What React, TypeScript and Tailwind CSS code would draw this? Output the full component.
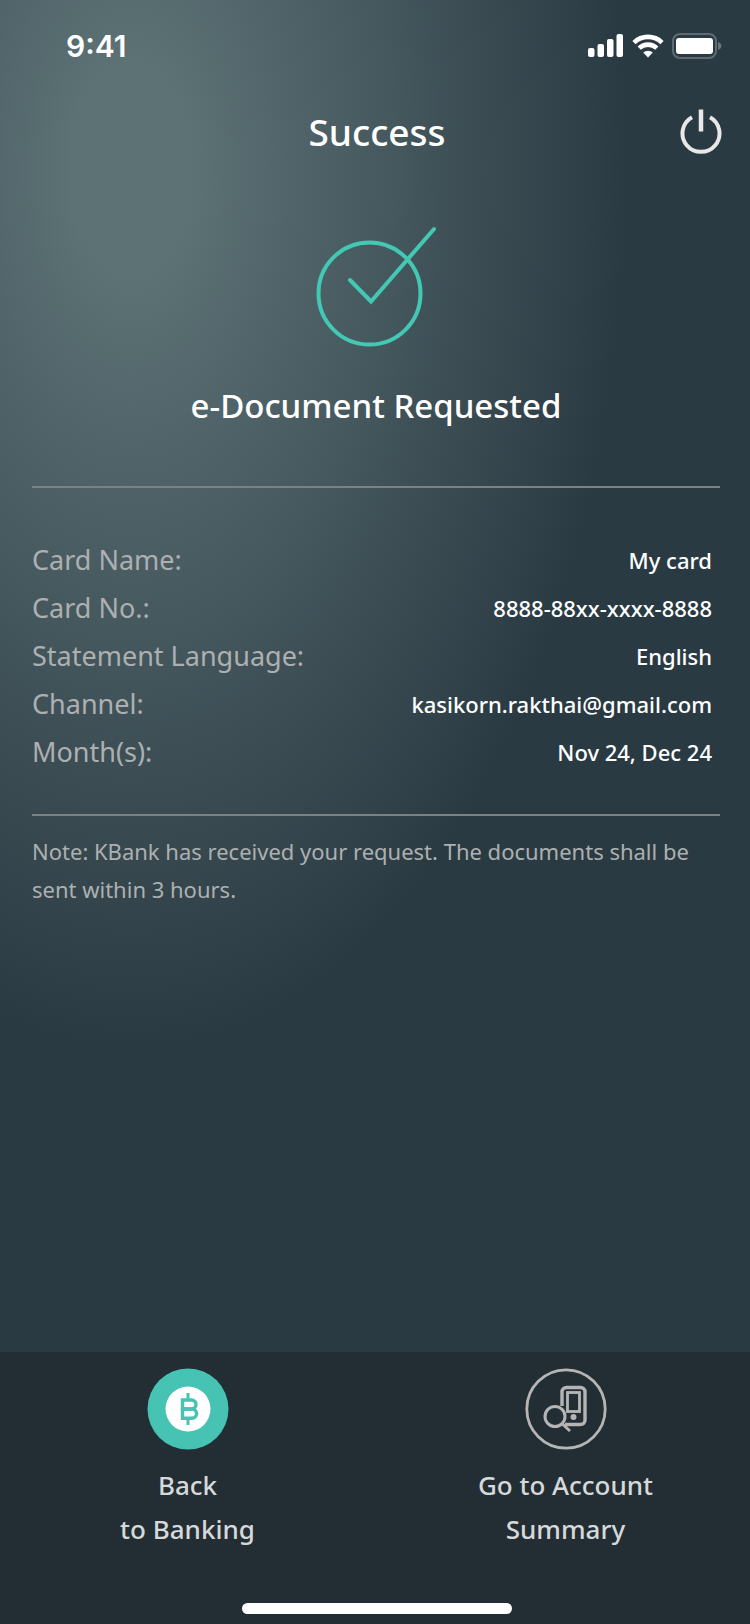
import React from 'react';

const CARD_DETAILS = [
    { label: 'Card Name:', value: 'My card' },
    { label: 'Card No.:', value: '8888-88xx-xxxx-8888' },
    { label: 'Statement Language:', value: 'English' },
    { label: 'Channel:', value: 'kasikorn.rakthai@gmail.com' },
    { label: 'Month(s):', value: 'Nov 24, Dec 24' },
];

const SignalIcon = () => (
    <svg className="w-9 h-6" viewBox="0 0 36 24" fill="currentColor" aria-hidden="true">
        <rect x="0" y="14" width="6.5" height="9" rx="2" />
        <rect x="9.5" y="10" width="6.5" height="13" rx="2" />
        <rect x="19" y="5" width="6.5" height="18" rx="2" />
        <rect x="28.5" y="0" width="6.5" height="23" rx="2" />
    </svg>
);

const WifiIcon = () => (
    <svg className="w-8 h-6" viewBox="0 0 32 24" fill="none" stroke="currentColor" strokeWidth="4.6" aria-hidden="true">
        <path d="M2 8.6a20 20 0 0 1 28 0" />
        <path d="M7.2 14.2a12.6 12.6 0 0 1 17.6 0" />
        <path d="M11.2 18.6a7 7 0 0 1 9.6 0L16 23.4z" fill="currentColor" stroke="none" />
    </svg>
);

const BatteryIcon = () => (
    <svg className="w-[50px] h-[26px]" viewBox="0 0 50 26" aria-hidden="true">
        <rect x="1" y="1" width="43" height="24" rx="7" fill="none" stroke="#fff" strokeOpacity="0.25" strokeWidth="2" />
        <rect x="4" y="5" width="37" height="16" rx="3" fill="#fff" />
        <path d="M46 9c2 .6 3.4 2.2 3.4 4s-1.4 3.4-3.4 4z" fill="#fff" fillOpacity="0.3" />
    </svg>
);

const PowerIcon = () => (
    <svg className="w-[42px] h-[46px]" viewBox="0 0 42 46" fill="none" stroke="currentColor" aria-hidden="true">
        <path d="M12 8.2a18.5 18.5 0 1 0 18 0" strokeWidth="4" />
        <path d="M21 0.5v22" strokeWidth="4.5" />
    </svg>
);

const SuccessIcon = () => (
    <svg className="w-[120px] h-[122px]" viewBox="0 0 120 122" fill="none" stroke="#43c8b4" strokeWidth="4" strokeLinecap="round" aria-hidden="true">
        <circle cx="53.5" cy="67.5" r="51" />
        <path d="M34 54l21 21.500L118 3" />
    </svg>
);

const BankingIcon = () => (
    <svg className="w-[82px] h-[82px]" viewBox="0 0 82 82" fill="none" aria-hidden="true">
        <circle cx="41" cy="41" r="40.5" fill="#46c3b3" />
        <circle cx="41" cy="41" r="22.5" fill="#fff" />
        <g stroke="#46c3b3" strokeWidth="3.4">
            <path d="M35.500 32h9a4.500 4.500 0 0 1 0 9h-9z" />
            <path d="M35.500 41h9.500a4.600 4.600 0 0 1 0 9.200h-9.500z" />
            <path d="M41 25v6M41 51v6" strokeWidth="3" />
        </g>
    </svg>
);

const AccountIcon = () => (
    <svg className="w-[82px] h-[82px]" viewBox="0 0 82 82" fill="none" stroke="#b5b5b6" strokeWidth="2.8" aria-hidden="true">
        <circle cx="41" cy="41" r="39.2" />
        <path d="M37 38V24a4.500 4.500 0 0 1 4.500-4.500h14A4.500 4.500 0 0 1 60 24v28a4.500 4.500 0 0 1-4.500 4.500H40" strokeWidth="3.4" />
        <rect x="42.5" y="24.5" width="12" height="19" />
        <circle cx="48.5" cy="49" r="3" fill="#b5b5b6" stroke="none" />
        <circle cx="30" cy="48.5" r="10" strokeWidth="3" />
        <path d="M37.500 56l7.500 7" strokeWidth="3" />
    </svg>
);

const StatusBar = () => (
    <div className="h-[92px] pl-[66px] pr-7 flex items-center justify-between text-white">
        <span className="font-[Inter] font-semibold text-[30px] leading-9">9:41</span>
        <div className="flex items-center">
            <SignalIcon />
            <span className="ml-2"><WifiIcon /></span>
            <span className="ml-2"><BatteryIcon /></span>
        </div>
    </div>
);

const Header = () => (
    <header className="h-20 pl-8 pr-7 grid grid-cols-[1fr_auto_1fr] items-center text-white">
        <h1 className="col-start-2 text-[37px] leading-[48px] font-medium">Success</h1>
        <button type="button" className="justify-self-end text-[#e9e7e7]" aria-label="Log out">
            <PowerIcon />
        </button>
    </header>
);

const BottomNav = () => (
    <nav className="bg-[#222e34] pt-4 pb-[10px]">
        <div className="grid grid-cols-2 text-[26px] leading-[44px] font-medium text-[#d6d8d9]">
            <button type="button" className="flex flex-col items-center">
                <BankingIcon />
                <span className="mt-[13px]">Back<br />to Banking</span>
            </button>
            <button type="button" className="pl-1.5 flex flex-col items-center">
                <AccountIcon />
                <span className="mt-[13px]">Go to Account<br />Summary</span>
            </button>
        </div>
        <div className="pl-1 mt-[52px] flex justify-center">
            <div className="w-[270px] h-[11px] rounded-full bg-white" />
        </div>
    </nav>
);

export default function App() {
    return (
        <div className="min-h-screen flex flex-col font-['Noto_Sans',sans-serif] bg-[#2a3a42] bg-[radial-gradient(495px_880px_at_132px_170px,#5d7274_0%,#5d7274_12%,#50646a_32%,#45585e_53%,#3a4b52_72%,#2f4048_91%,#2a3a42_100%)]">
            <StatusBar />
            <Header />
            <main className="grow pl-8 pr-[30px]">
                <section className="pt-[54px] pb-14 flex flex-col items-center border-b-2 border-[#7f8080]">
                    <SuccessIcon />
                    <h2 className="mt-[34px] text-[33px] leading-[48px] font-medium text-white">e-Document Requested</h2>
                </section>
                <dl className="pt-12 pb-[38px] border-b-2 border-[#7f8080]">
                    {CARD_DETAILS.map((item) => (
                        <div key={item.label} className="pr-2 flex items-center justify-between leading-[48px]">
                            <dt className="text-[27px] text-[#adb0b1]">{item.label}</dt>
                            <dd className="text-[22px] font-medium text-white">{item.value}</dd>
                        </div>
                    ))}
                </dl>
                <p className="mt-4 text-[22px] leading-[38px] text-[#adb0b1]">
                    Note: KBank has received your request. The documents shall be sent within 3 hours.
                </p>
            </main>
            <BottomNav />
        </div>
    );
}
